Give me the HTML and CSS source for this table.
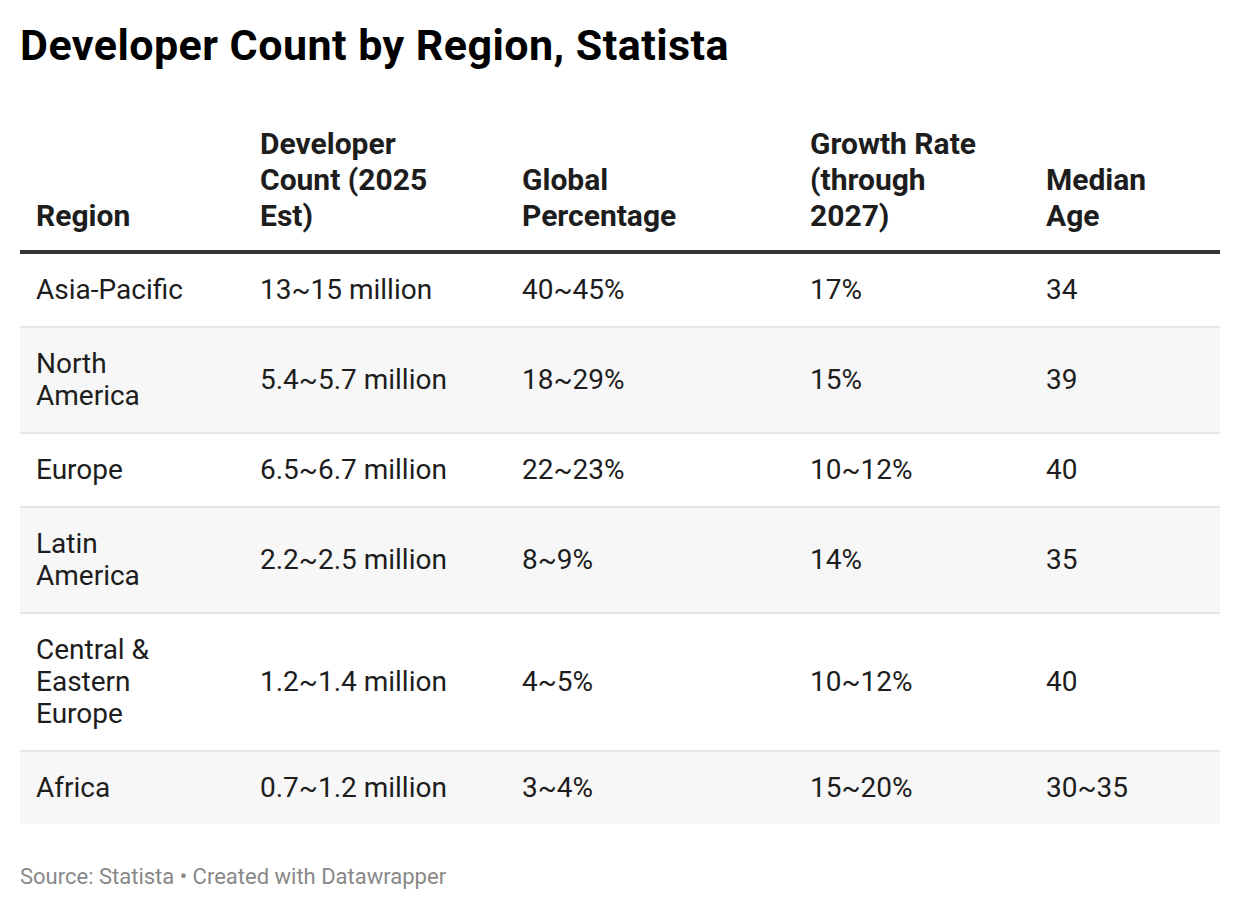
FILE: index.html
```html
<!DOCTYPE html>
<html>
<head>
<meta charset="utf-8">
<link rel="stylesheet" href="styles.css">
</head>
<body>
<div class="chart">
  <h1 class="title">Developer Count by Region, Statista</h1>
  <table class="tbl">
    <colgroup>
      <col class="c1"><col class="c2"><col class="c3"><col class="c4"><col class="c5">
    </colgroup>
    <thead>
      <tr>
        <th>Region</th>
        <th>Developer Count (2025 Est)</th>
        <th>Global Percentage</th>
        <th>Growth Rate (through 2027)</th>
        <th>Median Age</th>
      </tr>
    </thead>
    <tbody>
      <tr><td>Asia-Pacific</td><td>13~15 million</td><td>40~45%</td><td>17%</td><td>34</td></tr>
      <tr class="alt"><td>North America</td><td>5.4~5.7 million</td><td>18~29%</td><td>15%</td><td>39</td></tr>
      <tr><td>Europe</td><td>6.5~6.7 million</td><td>22~23%</td><td>10~12%</td><td>40</td></tr>
      <tr class="alt"><td>Latin America</td><td>2.2~2.5 million</td><td>8~9%</td><td>14%</td><td>35</td></tr>
      <tr><td>Central &amp; Eastern Europe</td><td>1.2~1.4 million</td><td>4~5%</td><td>10~12%</td><td>40</td></tr>
      <tr class="alt last"><td>Africa</td><td>0.7~1.2 million</td><td>3~4%</td><td>15~20%</td><td>30~35</td></tr>
    </tbody>
  </table>
  <div class="footer">Source: Statista • Created with Datawrapper</div>
</div>
</body>
</html>
```
FILE: styles.css
```css
html, body {
  margin: 0;
  padding: 0;
  background: #ffffff;
}
body {
  font-family: Roboto, "Liberation Sans", Arial, sans-serif;
  color: #1d1d1d;
}
.chart {
  padding: 20px 20px 0 20px;
}
.title {
  margin: 0;
  font-size: 43px;
  font-weight: 700;
  line-height: 50px;
  letter-spacing: 0.45px;
  color: #000;
}
.tbl {
  margin-top: 56px;
  width: 1200px;
  border-collapse: collapse;
  table-layout: fixed;
}
.c1 { width: 224px; }
.c2 { width: 262px; }
.c3 { width: 288px; }
.c4 { width: 236px; }
.c5 { width: 190px; }
.tbl th {
  text-align: left;
  vertical-align: bottom;
  font-size: 30px;
  font-weight: 700;
  line-height: 36px;
  padding: 0 44px 16px 16px;
  border-bottom: 4px solid #333333;
  color: #1d1d1d;
}
.tbl td {
  font-size: 28px;
  font-weight: 400;
  line-height: 32px;
  padding: 20px 44px 20px 16px;
  border-bottom: 2px solid #e6e6e6;
  vertical-align: middle;
  color: #1d1d1d;
}
.tbl tr.alt td {
  background: #f7f7f7;
}
.tbl tr.last td {
  border-bottom: none;
}
.footer {
  margin-top: 39px;
  font-size: 22px;
  line-height: 28px;
  color: #888888;
}
```
